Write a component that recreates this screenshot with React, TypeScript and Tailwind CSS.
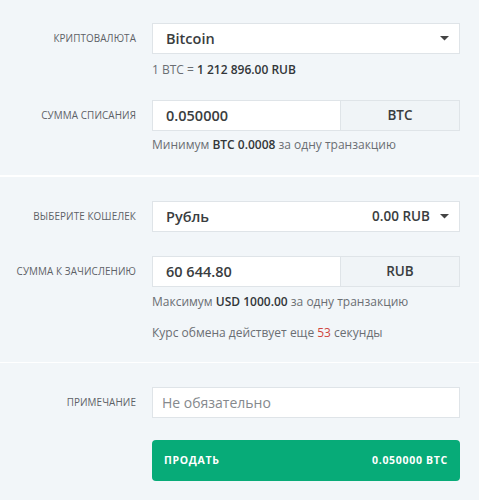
import { ReactNode } from "react";

const font = { fontFamily: '"Open Sans", "Noto Sans", sans-serif' };

function Row({ label, children }: { label: string; children: ReactNode }) {
  return (
    <div className="flex">
      <div className="flex h-[31px] w-[136px] shrink-0 items-center justify-end text-[9.9px] uppercase tracking-[0.1px] text-[#5d6166]">
        {label}
      </div>
      <div className="ml-[16px] w-[308px]">{children}</div>
    </div>
  );
}

function Caret() {
  return (
    <svg width="9" height="5" viewBox="0 0 9 5" className="ml-[10px]">
      <path d="M0 0 H9 L4.5 4.5 Z" fill="#444" />
    </svg>
  );
}

function Select({ value, extra }: { value: string; extra?: string }) {
  return (
    <div className="flex h-[31px] items-center border border-[#dfe4e8] bg-white pl-[13px] pr-[10px]">
      <span className="flex-1 text-[14.5px] font-semibold text-[#3a3d40]">{value}</span>
      {extra && <span className="text-[13.5px] font-semibold text-[#3a3d40]">{extra}</span>}
      <Caret />
    </div>
  );
}

function AmountInput({ value, unit }: { value: string; unit: string }) {
  return (
    <div className="flex h-[31px] border border-[#dfe4e8] bg-white">
      <div className="flex flex-1 items-center pl-[13px] text-[14.5px] font-semibold text-[#3a3d40]">
        {value}
      </div>
      <div className="flex w-[119px] items-center justify-center border-l border-[#dfe4e8] bg-[#f0f4f7] text-[13.5px] font-semibold text-[#3a3d40]">
        {unit}
      </div>
    </div>
  );
}

function Hint({ children, className = "" }: { children: ReactNode; className?: string }) {
  return (
    <div className={`flex h-[16px] items-center text-[12px] text-[#6a6e73] ${className}`}>
      <span>{children}</span>
    </div>
  );
}

export default function App() {
  return (
    <div className="min-h-[500px] w-[479px] bg-[#f2f6f9]" style={font}>
      <div className="pt-[23px] pb-[22px]">
        <Row label="Криптовалюта">
          <Select value="Bitcoin" />
          <Hint className="mt-[8px]">
            1 BTC = <b className="font-semibold text-[#333639]">1 212 896.00 RUB</b>
          </Hint>
        </Row>
        <div className="mt-[22px]">
          <Row label="Сумма списания">
            <AmountInput value="0.050000" unit="BTC" />
            <Hint className="mt-[6px]">
              Минимум <b className="font-semibold text-[#333639]">BTC 0.0008</b> за одну транзакцию
            </Hint>
          </Row>
        </div>
      </div>
      <div className="h-[2px] bg-white" />
      <div className="pt-[24px] pb-[21px]">
        <Row label="Выберите кошелек">
          <Select value="Рубль" extra="0.00 RUB" />
        </Row>
        <div className="mt-[24px]">
          <Row label="Сумма к зачислению">
            <AmountInput value="60 644.80" unit="RUB" />
            <Hint className="mt-[7px]">
              Максимум <b className="font-semibold text-[#333639]">USD 1000.00</b> за одну транзакцию
            </Hint>
            <Hint className="mt-[15px]">
              Курс обмена действует еще <span className="text-[#d0463f]">53</span> секунды
            </Hint>
          </Row>
        </div>
      </div>
      <div className="h-px bg-white" />
      <div className="pt-[24px] pb-[18px]">
        <Row label="Примечание">
          <div className="flex h-[31px] items-center border border-[#dfe4e8] bg-white pl-[9px] text-[14px] text-[#85898d]">
            Не обязательно
          </div>
          <button className="mt-[22px] flex h-[41px] w-full items-center justify-between rounded-[4px] bg-[#07ab78] px-[12px] text-[10.5px] font-bold tracking-[0.7px] text-white">
            <span>ПРОДАТЬ</span>
            <span>0.050000 BTC</span>
          </button>
        </Row>
      </div>
    </div>
  );
}
